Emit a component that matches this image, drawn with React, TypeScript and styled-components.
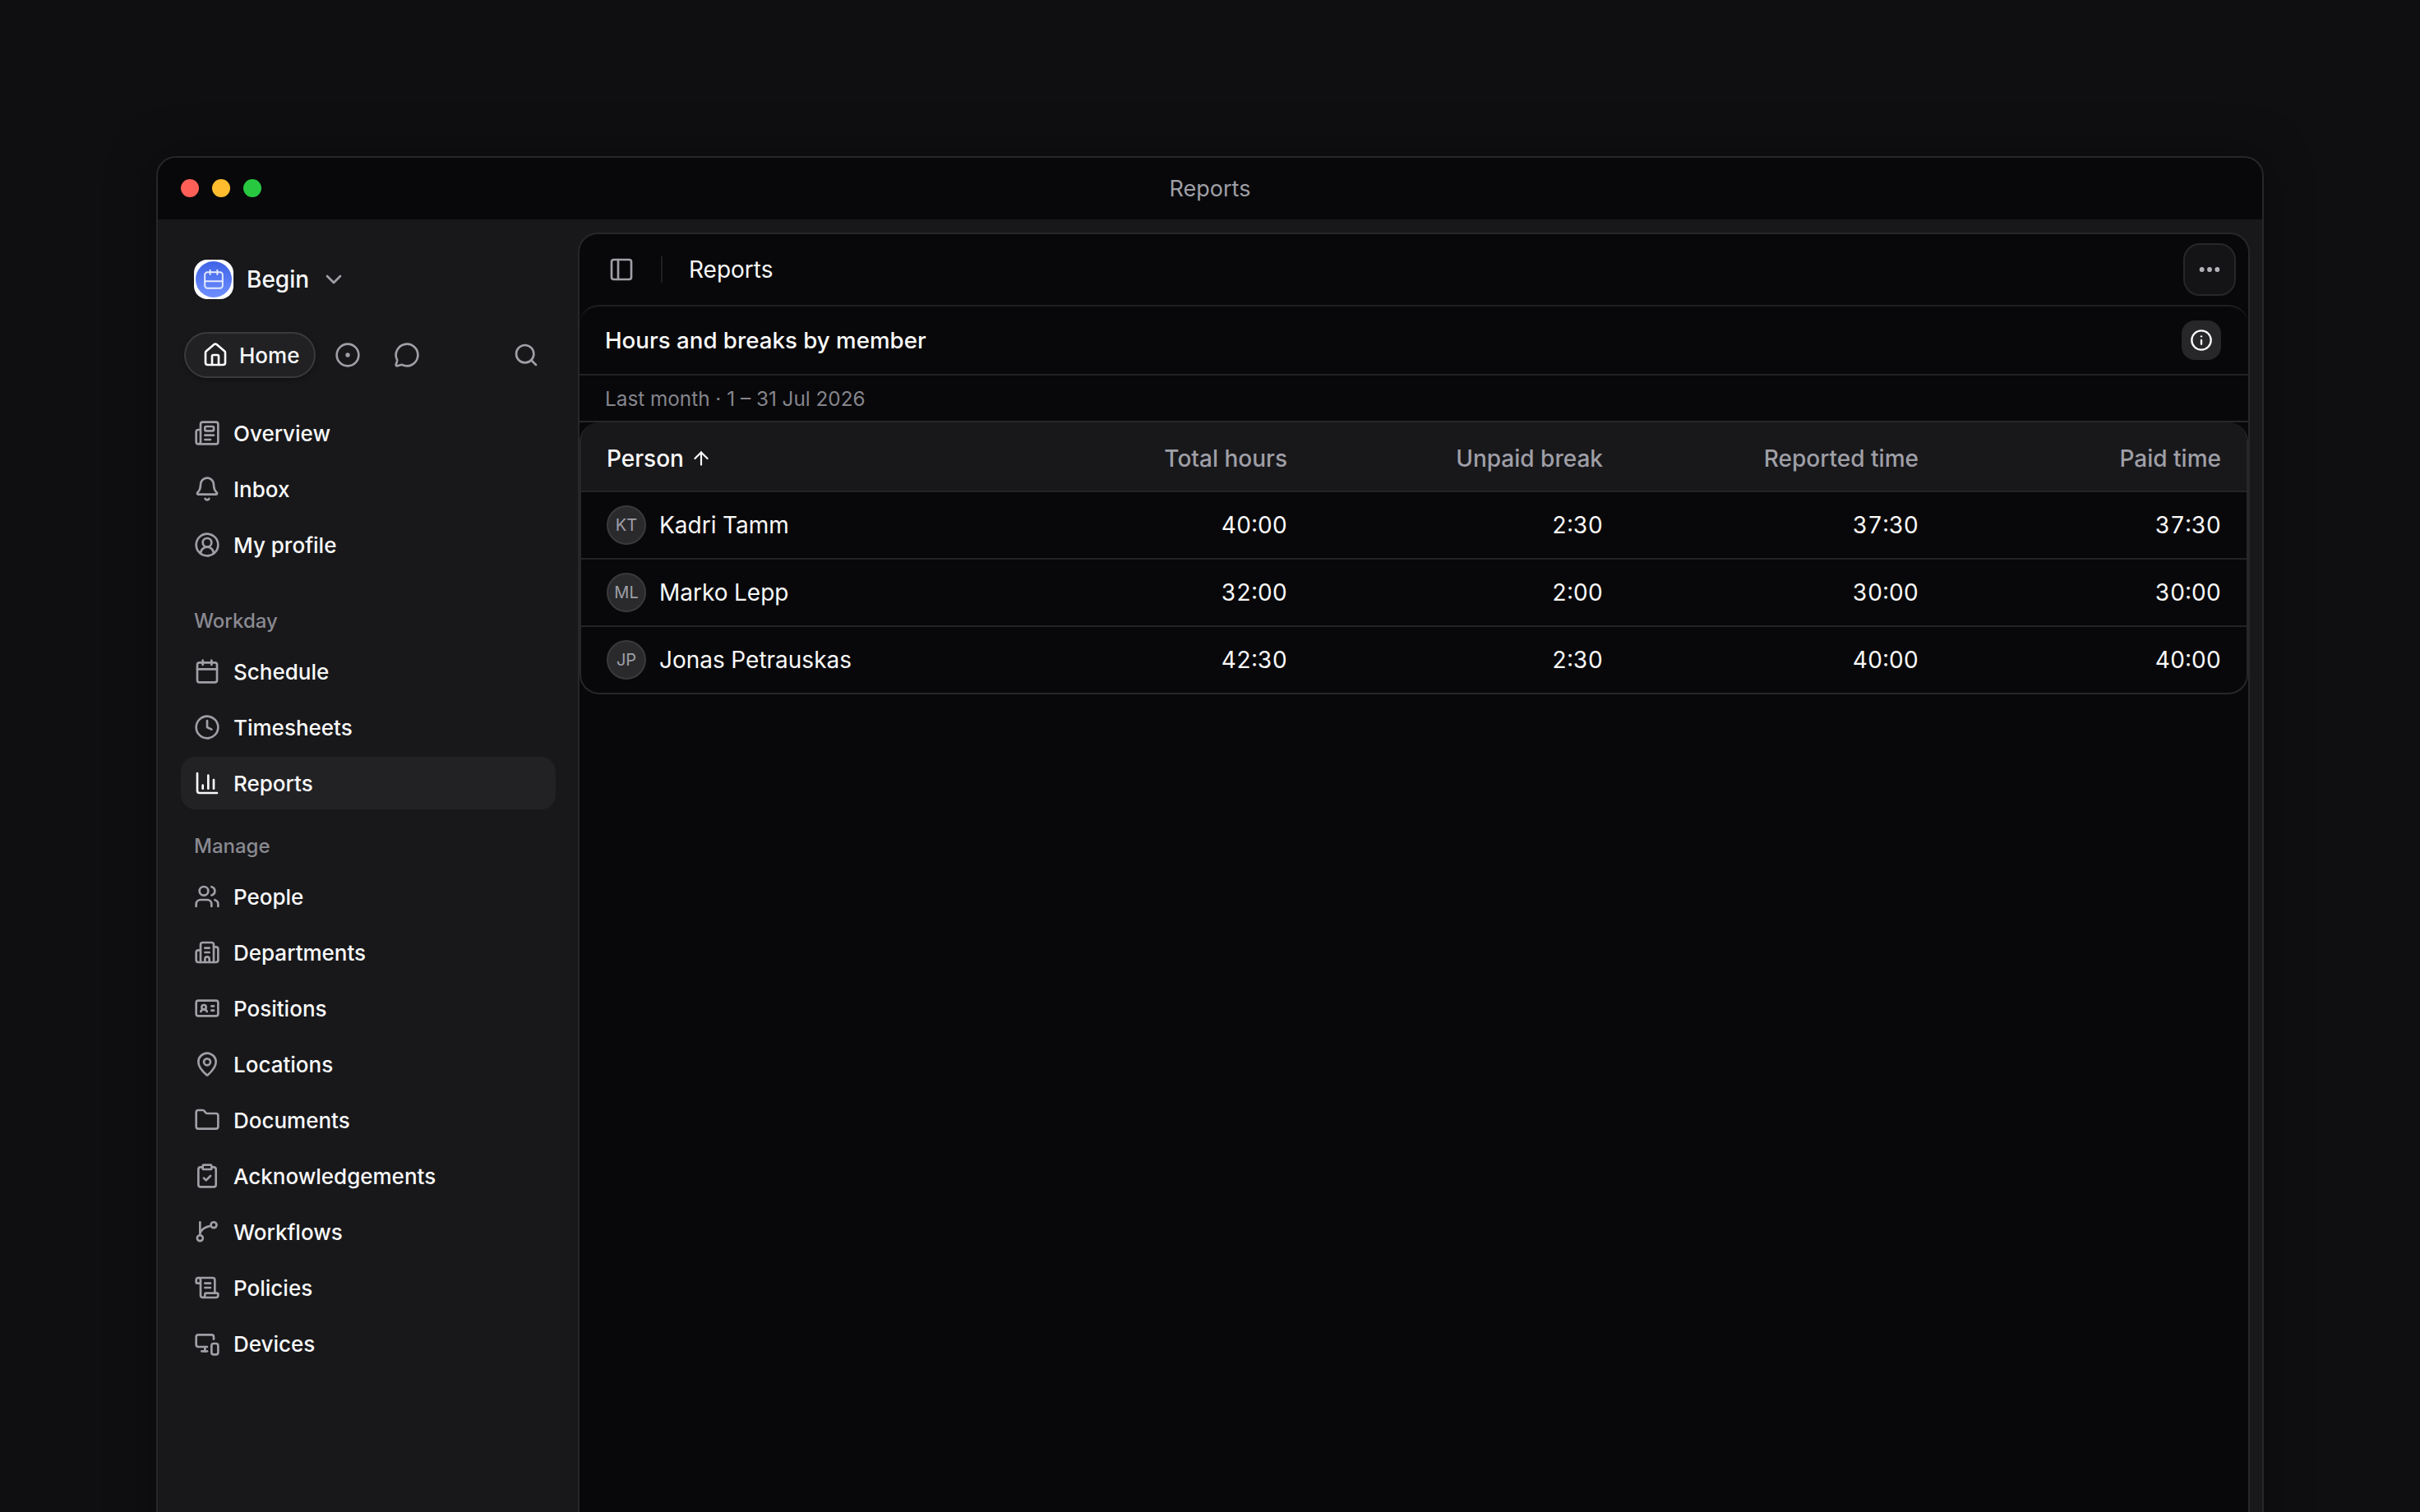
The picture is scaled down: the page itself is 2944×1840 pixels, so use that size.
import React, { FC } from "react";
import styled, { createGlobalStyle } from "styled-components";
import {
  ArrowUp,
  Bell,
  Building2,
  ChartColumn,
  ChevronDown,
  CircleDot,
  CircleUserRound,
  ClipboardCheck,
  Calendar,
  Clock,
  Ellipsis,
  Folder,
  House,
  IdCard,
  Info,
  LucideIcon,
  MapPin,
  MessageCircle,
  MonitorSmartphone,
  Newspaper,
  PanelLeft,
  ScrollText,
  Search,
  Users,
} from "lucide-react";

const GlobalStyle = createGlobalStyle`
  html, body {
    margin: 0;
    height: 100%;
    overflow: hidden;
    background: #0f0f12;
  }
  body {
    font-family: Inter, "Noto Sans", sans-serif;
    color: #fafafa;
  }
  * {
    box-sizing: border-box;
  }
`;

const Page = styled.div`
  height: 1840px;
  padding: 190px 190px 0;
  overflow: hidden;
`;

const AppWindow = styled.div`
  width: 2564px;
  height: 1800px;
  display: flex;
  flex-direction: column;
  background: #18181b;
  border: 2px solid #27272a;
  border-radius: 24px;
  overflow: hidden;
  box-shadow: 0 0 60px rgba(0, 0, 0, 0.35);
`;

const TitleBar = styled.div`
  position: relative;
  height: 75px;
  flex: none;
  display: flex;
  align-items: center;
  justify-content: center;
  background: #08080a;
  color: #9f9fa6;
  font-size: 27px;
`;

const Lights = styled.div`
  position: absolute;
  left: 28px;
  top: 26px;
  display: flex;
  gap: 16px;
`;

const Light = styled.span<{ $color: string }>`
  width: 22px;
  height: 22px;
  border-radius: 50%;
  background: ${(p) => p.$color};
`;

const Body = styled.div`
  flex: 1;
  display: flex;
  min-height: 0;
`;

const Sidebar = styled.aside`
  width: 511px;
  flex: none;
  padding: 49px 27px 0 28px;
`;

const Brand = styled.div`
  display: flex;
  align-items: center;
  height: 48px;
  padding-left: 16px;
  font-size: 28px;
  font-weight: 450;
  color: #fafafa;
`;

const Logo = styled.div`
  width: 48px;
  height: 48px;
  display: flex;
  align-items: center;
  justify-content: center;
  background: #fff;
  border-radius: 16px;
  margin-right: 16px;
`;

const LogoDisc = styled.div`
  width: 44px;
  height: 44px;
  display: flex;
  align-items: center;
  justify-content: center;
  color: #e4eaff;
  border-radius: 50%;
  background: linear-gradient(180deg, #3f63e6, #6f8fff);
`;

const BrandChevron = styled(ChevronDown)`
  margin-left: 14px;
  color: #9f9fa6;
`;

const TabRow = styled.div`
  display: flex;
  align-items: center;
  margin-top: 40px;
  height: 56px;
  padding-left: 4px;
`;

const HomeTab = styled.div`
  width: 160px;
  height: 56px;
  display: flex;
  align-items: center;
  gap: 13px;
  padding-left: 20px;
  background: #212124;
  border: 2px solid #3a3a3e;
  border-radius: 28px;
  font-size: 26px;
  font-weight: 450;
  box-shadow: 0 2px 6px rgba(0, 0, 0, 0.3);
`;

const TabIcon = styled.div<{ $ml: number }>`
  display: flex;
  margin-left: ${(p) => p.$ml}px;
  color: #9f9fa6;
`;

const NavSection = styled.nav`
  display: flex;
  flex-direction: column;
  gap: 4px;
  margin-top: 35px;
`;

const NavHeading = styled.div<{ $mt: number }>`
  margin: ${(p) => p.$mt}px 0 8px;
  height: 34px;
  line-height: 34px;
  padding-left: 16px;
  font-size: 24px;
  font-weight: 450;
  color: #8a8a91;
`;

const NavItem = styled.div<{ $active?: boolean }>`
  height: 64px;
  display: flex;
  align-items: center;
  gap: 16px;
  padding-left: 16px;
  border-radius: 18px;
  font-size: 26px;
  font-weight: 450;
  color: #fafafa;
  background: ${(p) => (p.$active ? "#222225" : "transparent")};
  svg {
    color: ${(p) => (p.$active ? "#fafafa" : "#9f9fa6")};
  }
`;

const Main = styled.main`
  flex: 1;
  margin: 16px 15px 0 0;
  background: #08080a;
  border: 2px solid #27272a;
  border-bottom: 0;
  border-radius: 24px 24px 0 0;
  overflow: hidden;
`;

const TopBar = styled.div`
  height: 86px;
  display: flex;
  align-items: center;
  padding: 0 15px 0 35px;
`;

const Divider = styled.div`
  width: 2px;
  height: 32px;
  margin: 0 32px 0 32px;
  background: #1f1f22;
`;

const TopTitle = styled.div`
  flex: 1;
  font-size: 28px;
`;

const MoreButton = styled.button`
  width: 64px;
  height: 64px;
  display: flex;
  align-items: center;
  justify-content: center;
  padding: 0;
  background: #141416;
  border: 2px solid #27272a;
  border-radius: 20px;
  color: #b4b4ba;
`;

const Card = styled.section`
  border-top: 2px solid #1f1f22;
  border-radius: 24px 24px 0 0;
`;

const CardHead = styled.div`
  height: 84px;
  display: flex;
  align-items: center;
  justify-content: space-between;
  padding: 0 33px 0 31px;
  border-bottom: 2px solid #222225;
  font-size: 27.7px;
  font-weight: 450;
`;

const InfoButton = styled.button`
  width: 48px;
  height: 48px;
  display: flex;
  align-items: center;
  justify-content: center;
  padding: 0;
  border: 0;
  border-radius: 16px;
  background: #27272a;
  color: #fafafa;
`;

const Period = styled.div`
  height: 57px;
  display: flex;
  align-items: center;
  padding-left: 31px;
  font-size: 24.3px;
  color: #85858c;
  border-bottom: 2px solid #27272a;
`;

const Table = styled.div`
  border: 2px solid #27272a;
  border-top: 0;
  border-radius: 24px;
  overflow: hidden;
`;

const Row = styled.div<{ $head?: boolean }>`
  display: grid;
  grid-template-columns: 1fr 384px 384px 384px 368px;
  align-items: center;
  height: ${(p) => (p.$head ? "83px" : "82px")};
  padding: ${(p) => (p.$head ? "4px" : "0")} 31px 0 31px;
  font-size: 28px;
  background: ${(p) => (p.$head ? "#18181b" : "transparent")};
  border-top: ${(p) => (p.$head ? "0" : "2px solid #232326")};
  font-weight: 400;
  font-variant-numeric: tabular-nums;
`;

const HeadCell = styled.div`
  display: flex;
  align-items: center;
  gap: 8px;
  font-weight: 450;
`;

const NumHead = styled.div`
  text-align: right;
  font-weight: 450;
  color: #9f9fa6;
`;

const Num = styled.div`
  text-align: right;
`;

const Person = styled.div`
  display: flex;
  align-items: center;
  gap: 16px;
`;

const Avatar = styled.div`
  width: 48px;
  height: 48px;
  display: flex;
  align-items: center;
  justify-content: center;
  border-radius: 50%;
  background: #2a2a2d;
  border: 2px solid #3a3a3e;
  color: #9f9fa6;
  font-size: 20px;
`;

type IconType = LucideIcon | FC<{ size?: number; strokeWidth?: number }>;

interface NavEntry {
  label: string;
  icon: IconType;
  active?: boolean;
}

// lucide has no branch icon with this shape
const BranchIcon: FC<{ size?: number; strokeWidth?: number }> = ({ size = 32, strokeWidth = 2 }) => (
  <svg width={size} height={size} viewBox="0 0 24 24" fill="none" stroke="currentColor" strokeWidth={strokeWidth} strokeLinecap="round" strokeLinejoin="round">
    <path d="M5.5 3.2v12" />
    <circle cx="5.5" cy="17.8" r="2.6" />
    <circle cx="18" cy="5.8" r="2.6" />
    <path d="M15.5 6.5C10 7.5 7 9.5 5.5 13" />
  </svg>
);

// the brand calendar has its rule low down and no date cells
const BrandCalendar: FC = () => (
  <svg width={26} height={26} viewBox="0 0 24 24" fill="none" stroke="currentColor" strokeWidth={1.8} strokeLinecap="round" strokeLinejoin="round">
    <rect x="2" y="4" width="20" height="18" rx="3" />
    <path d="M8 1.5v5" />
    <path d="M16 1.5v5" />
    <path d="M2 14h20" />
  </svg>
);

const topNav: NavEntry[] = [
  { label: "Overview", icon: Newspaper },
  { label: "Inbox", icon: Bell },
  { label: "My profile", icon: CircleUserRound },
];

const workdayNav: NavEntry[] = [
  { label: "Schedule", icon: Calendar },
  { label: "Timesheets", icon: Clock },
  { label: "Reports", icon: ChartColumn, active: true },
];

const manageNav: NavEntry[] = [
  { label: "People", icon: Users },
  { label: "Departments", icon: Building2 },
  { label: "Positions", icon: IdCard },
  { label: "Locations", icon: MapPin },
  { label: "Documents", icon: Folder },
  { label: "Acknowledgements", icon: ClipboardCheck },
  { label: "Workflows", icon: BranchIcon },
  { label: "Policies", icon: ScrollText },
  { label: "Devices", icon: MonitorSmartphone },
];

const members = [
  { initials: "KT", name: "Kadri Tamm", total: "40:00", unpaid: "2:30", reported: "37:30", paid: "37:30" },
  { initials: "ML", name: "Marko Lepp", total: "32:00", unpaid: "2:00", reported: "30:00", paid: "30:00" },
  { initials: "JP", name: "Jonas Petrauskas", total: "42:30", unpaid: "2:30", reported: "40:00", paid: "40:00" },
];

const NavList: FC<{ items: NavEntry[] }> = ({ items }) => (
  <>
    {items.map(({ label, icon: Icon, active }) => (
      <NavItem key={label} $active={active}>
        <Icon size={32} strokeWidth={2} />
        {label}
      </NavItem>
    ))}
  </>
);

export default function App() {
  return (
    <>
      <GlobalStyle />
      <Page>
        <AppWindow>
          <TitleBar>
            <Lights>
              <Light $color="#ff5f57" />
              <Light $color="#febc2e" />
              <Light $color="#28c840" />
            </Lights>
            Reports
          </TitleBar>
          <Body>
            <Sidebar>
              <Brand>
                <Logo>
                  <LogoDisc>
                    <BrandCalendar />
                  </LogoDisc>
                </Logo>
                Begin
                <BrandChevron size={32} strokeWidth={2} />
              </Brand>
              <TabRow>
                <HomeTab>
                  <House size={32} strokeWidth={2} />
                  Home
                </HomeTab>
                <TabIcon $ml={23}><CircleDot size={32} strokeWidth={2} /></TabIcon>
                <TabIcon $ml={40}><MessageCircle size={32} strokeWidth={2} /></TabIcon>
                <TabIcon $ml={113}><Search size={32} strokeWidth={2} /></TabIcon>
              </TabRow>
              <NavSection>
                <NavList items={topNav} />
                <NavHeading $mt={40}>Workday</NavHeading>
                <NavList items={workdayNav} />
                <NavHeading $mt={24}>Manage</NavHeading>
                <NavList items={manageNav} />
              </NavSection>
            </Sidebar>
            <Main>
              <TopBar>
                <PanelLeft size={32} strokeWidth={2} color="#9f9fa6" />
                <Divider />
                <TopTitle>Reports</TopTitle>
                <MoreButton>
                  <Ellipsis size={32} strokeWidth={2.4} />
                </MoreButton>
              </TopBar>
              <Card>
                <CardHead>
                  Hours and breaks by member
                  <InfoButton>
                    <Info size={28} strokeWidth={2} />
                  </InfoButton>
                </CardHead>
                <Period>Last month · 1 – 31 Jul 2026</Period>
                <Table>
                  <Row $head>
                    <HeadCell>
                      Person
                      <ArrowUp size={26} strokeWidth={2} />
                    </HeadCell>
                    <NumHead>Total hours</NumHead>
                    <NumHead>Unpaid break</NumHead>
                    <NumHead>Reported time</NumHead>
                    <NumHead>Paid time</NumHead>
                  </Row>
                  {members.map((m) => (
                    <Row key={m.initials}>
                      <Person>
                        <Avatar>{m.initials}</Avatar>
                        {m.name}
                      </Person>
                      <Num>{m.total}</Num>
                      <Num>{m.unpaid}</Num>
                      <Num>{m.reported}</Num>
                      <Num>{m.paid}</Num>
                    </Row>
                  ))}
                </Table>
              </Card>
            </Main>
          </Body>
        </AppWindow>
      </Page>
    </>
  );
}
